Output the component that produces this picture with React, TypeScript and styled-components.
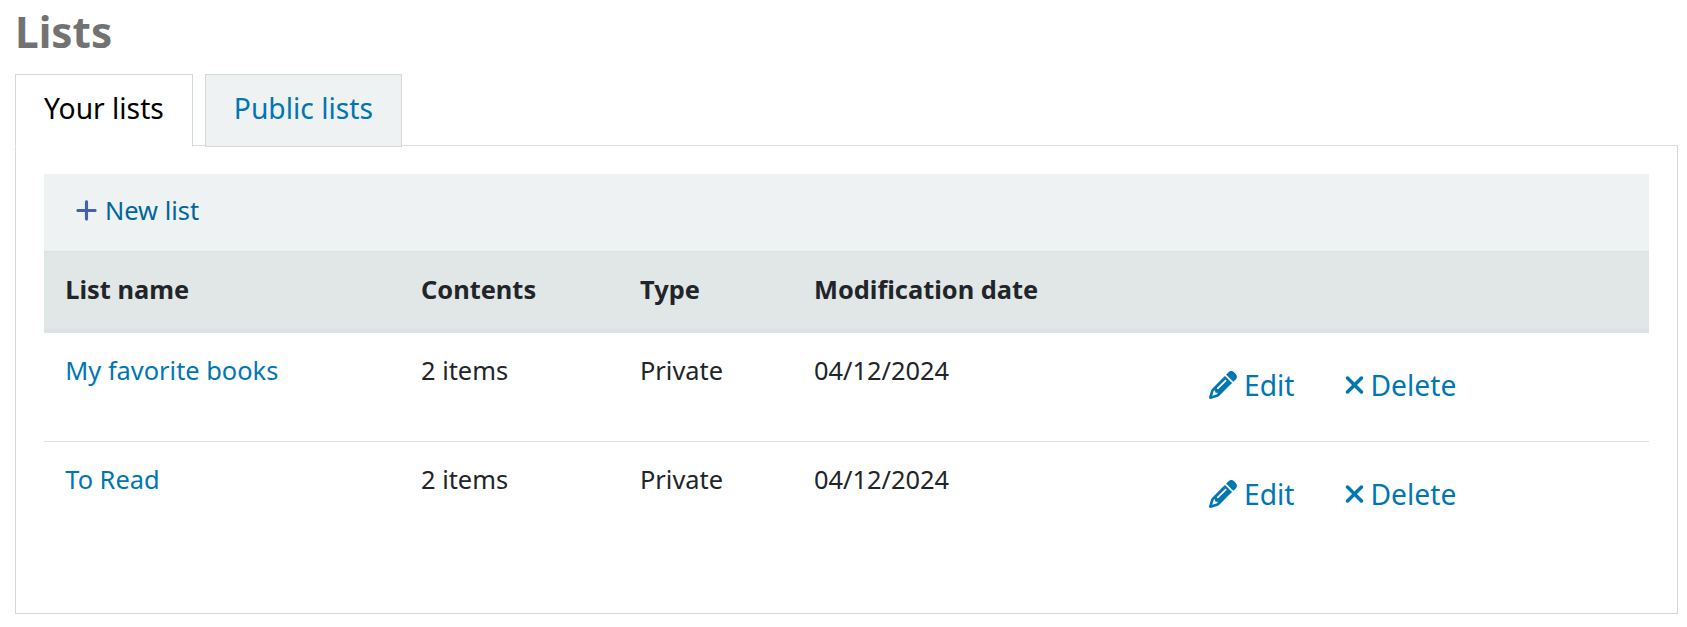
import React from "react";
import styled, { createGlobalStyle } from "styled-components";
import { FaPencil, FaPlus, FaXmark } from "react-icons/fa6";

const GlobalStyle = createGlobalStyle`
  * { box-sizing: border-box; }
  body {
    margin: 0;
    background: #fff;
    color: #212529;
    font-family: "Noto Sans", sans-serif;
    font-size: 28.22px;
  }
`;

const Page = styled.main`
  padding: 5px 9px 0 15px;
`;

const Title = styled.h1`
  margin: 0;
  height: 69px;
  font-size: 42.3px;
  line-height: 54px;
  font-weight: 700;
  color: #727272;
`;

const Tabs = styled.nav`
  display: flex;
  gap: 12px;
  margin-bottom: -2px;
  position: relative;
`;

const Tab = styled.a<{ $active?: boolean }>`
  height: 73px;
  padding: 0 28px;
  line-height: 67px;
  white-space: nowrap;
  text-decoration: none;
  border: 1px solid #d6d8d8;
  border-bottom-color: ${(p) => (p.$active ? "#fff" : "#d6d8d8")};
  background: ${(p) => (p.$active ? "#fff" : "#eef2f3")};
  color: ${(p) => (p.$active ? "#000" : "#0076b2")};
`;

const Panel = styled.section`
  height: 469px;
  padding: 28px 28px 0 28px;
  border: 1px solid #d6d8d8;
  border-top-color: #dedede;
`;

const Toolbar = styled.div`
  display: flex;
  height: 77px;
  padding-left: 30px;
  background: #eef2f3;
`;

const NewButton = styled.a`
  display: flex;
  align-items: center;
  height: 72px;
  gap: 6px;
  font-size: 25.4px;
  line-height: 36px;
  color: #006699;
  svg {
    color: #4461ae;
    width: 25px;
    height: 25px;
    margin-top: 1px;
  }
`;

const Table = styled.table`
  width: 100%;
  table-layout: fixed;
  border-collapse: separate;
  border-spacing: 0;
  font-size: 25.4px;
  line-height: 38px;
`;

const Col = styled.col<{ $w?: number }>`
  width: ${(p) => (p.$w ? `${p.$w}px` : "auto")};
`;

const HeadCell = styled.th`
  height: 82px;
  padding: 18px 0 0 22px;
  vertical-align: top;
  text-align: left;
  font-weight: 700;
  background: #e1e7e7;
  border-top: 1px solid #dce1e2;
  border-bottom: 4px solid #dee2e6;
  &:first-child { padding-left: 21.3px; }
`;

const Row = styled.tr`
  & + & > td {
    border-top: 1px solid #dee0e1;
    height: 109px;
  }
`;

const Cell = styled.td`
  height: 108px;
  padding: 18px 0 0 22px;
  vertical-align: top;
  &:first-child { padding-left: 21.3px; }
`;

const ListLink = styled.a`
  color: #0076b2;
`;

const Actions = styled.div`
  display: flex;
  padding-top: 15px;
  font-size: 28.22px;
`;

const Action = styled.a<{ $space?: number }>`
  display: flex;
  align-items: center;
  margin-right: ${(p) => p.$space ?? 0}px;
  color: #0076b2;
`;

const PencilIcon = styled(FaPencil)`
  width: 28px;
  height: 28px;
  margin-right: 7px;
`;

const DeleteIcon = styled(FaXmark)`
  width: 21px;
  height: 28px;
  margin-right: 6px;
`;

const lists = [
  { name: "My favorite books", contents: "2 items", type: "Private", modified: "04/12/2024" },
  { name: "To Read", contents: "2 items", type: "Private", modified: "04/12/2024" },
];

export default function App() {
  return (
    <>
      <GlobalStyle />
      <Page>
        <Title>Lists</Title>
        <Tabs>
          <Tab $active>Your lists</Tab>
          <Tab>Public lists</Tab>
        </Tabs>
        <Panel>
          <Toolbar>
            <NewButton>
              <FaPlus />
              New list
            </NewButton>
          </Toolbar>
          <Table>
            <colgroup>
              <Col $w={355} />
              <Col $w={219} />
              <Col $w={174} />
              <Col $w={395} />
              <Col />
            </colgroup>
            <thead>
              <tr>
                <HeadCell>List name</HeadCell>
                <HeadCell>Contents</HeadCell>
                <HeadCell>Type</HeadCell>
                <HeadCell>Modification date</HeadCell>
                <HeadCell />
              </tr>
            </thead>
            <tbody>
              {lists.map((list) => (
                <Row key={list.name}>
                  <Cell><ListLink>{list.name}</ListLink></Cell>
                  <Cell>{list.contents}</Cell>
                  <Cell>{list.type}</Cell>
                  <Cell>{list.modified}</Cell>
                  <Cell>
                    <Actions>
                      <Action $space={49}><PencilIcon />Edit</Action>
                      <Action><DeleteIcon />Delete</Action>
                    </Actions>
                  </Cell>
                </Row>
              ))}
            </tbody>
          </Table>
        </Panel>
      </Page>
    </>
  );
}
